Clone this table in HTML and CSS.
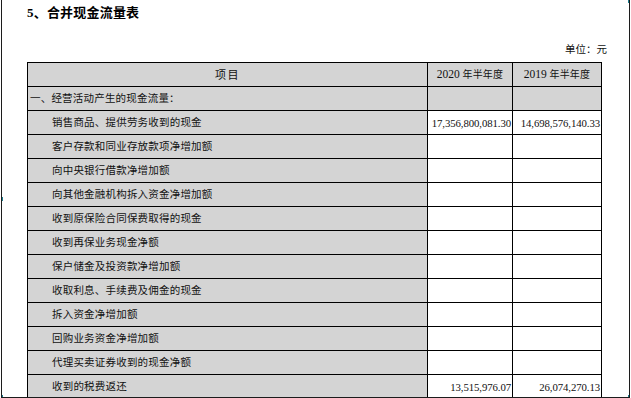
FILE: index.html
```html
<!DOCTYPE html>
<html lang="zh-CN">
<head>
<meta charset="utf-8">
<title>合并现金流量表</title>
<link rel="stylesheet" href="styles.css">
</head>
<body>
<div class="page">
  <h1 class="title"><span class="num">5</span>、合并现金流量表</h1>
  <div class="unit">单位：元</div>
  <table class="cf">
    <colgroup><col class="c1"><col class="c2"><col class="c3"></colgroup>
    <thead>
      <tr><th class="item">项目</th><th><span class="yr">2020</span> 年半年度</th><th><span class="yr">2019</span> 年半年度</th></tr>
    </thead>
    <tbody>
      <tr class="sec"><td class="lbl">一、经营活动产生的现金流量：</td><td></td><td></td></tr>
      <tr><td class="lbl ind">销售商品、提供劳务收到的现金</td><td class="amt">17,356,800,081.30</td><td class="amt">14,698,576,140.33</td></tr>
      <tr><td class="lbl ind">客户存款和同业存放款项净增加额</td><td></td><td></td></tr>
      <tr><td class="lbl ind">向中央银行借款净增加额</td><td></td><td></td></tr>
      <tr><td class="lbl ind">向其他金融机构拆入资金净增加额</td><td></td><td></td></tr>
      <tr><td class="lbl ind">收到原保险合同保费取得的现金</td><td></td><td></td></tr>
      <tr><td class="lbl ind">收到再保业务现金净额</td><td></td><td></td></tr>
      <tr><td class="lbl ind">保户储金及投资款净增加额</td><td></td><td></td></tr>
      <tr><td class="lbl ind">收取利息、手续费及佣金的现金</td><td></td><td></td></tr>
      <tr><td class="lbl ind">拆入资金净增加额</td><td></td><td></td></tr>
      <tr><td class="lbl ind">回购业务资金净增加额</td><td></td><td></td></tr>
      <tr><td class="lbl ind">代理买卖证券收到的现金净额</td><td></td><td></td></tr>
      <tr><td class="lbl ind">收到的税费返还</td><td class="amt">13,515,976.07</td><td class="amt">26,074,270.13</td></tr>
    </tbody>
  </table>
  <span class="handle h-ml"></span>
  <span class="handle h-tr"></span>
  <span class="handle h-bl"></span>
  <span class="handle h-br"></span>
</div>
</body>
</html>
```

FILE: styles.css
```css
html, body {
  margin: 0;
  padding: 0;
  background: #fff;
}
body {
  font-family: "Liberation Serif", "Noto Sans CJK SC", serif;
  color: #111;
}
.page {
  position: relative;
  box-sizing: border-box;
  width: 629px;
  height: 398px;
  margin-left: 1px;
  padding: 0 0 0 25px;
  border-left: 1px solid #1c1c1c;
  border-right: 1px solid #1c1c1c;
  border-bottom: 1px solid #1c1c1c;
  overflow: hidden;
}
.title {
  margin: 0;
  padding-top: 4px;
  font-size: 13px;
  line-height: 18px;
  font-weight: bold;
  color: #000;
  letter-spacing: 0.2px;
}
.title .num {
  font-family: "Liberation Serif", serif;
}
.unit {
  margin-top: 21px;
  padding-right: 22px;
  text-align: right;
  font-size: 10.5px;
  line-height: 14px;
}
.cf {
  margin-top: 5px;
  width: 575px;
  table-layout: fixed;
  border-collapse: collapse;
}
.c1 { width: 400px; }
.c2 { width: 85px; }
.c3 { width: 89px; }
.cf th, .cf td {
  border: 1px solid #000;
  height: 24px;
  padding: 0;
  box-sizing: border-box;
  font-size: 10.5px;
  line-height: 14px;
  white-space: nowrap;
  overflow: hidden;
}
.cf th {
  background: #d4d4d4;
  font-weight: normal;
  text-align: center;
  font-size: 10px;
  letter-spacing: 0.2px;
}
.cf th.item {
  font-size: 11px;
  letter-spacing: 1.5px;
}
.cf th .yr {
  font-size: 11.5px;
  letter-spacing: 0;
}
.cf .lbl {
  background: #d4d4d4;
  letter-spacing: 0.2px;
  padding-left: 2px;
}
.cf .lbl.ind {
  padding-left: 24px;
}
.cf .sec td {
  background: #d4d4d4;
}
.cf td.amt {
  text-align: right;
  font-family: "Liberation Serif", serif;
  font-size: 10.8px;
  letter-spacing: -0.1px;
  padding-right: 1px;
}
.handle {
  position: absolute;
  width: 2px;
  height: 3px;
  background: #1b7c8c;
}
.h-ml { left: -1px; top: 197px; height: 4px; }
.h-tr { right: -1px; top: 0; }
.h-bl { left: -1px; bottom: -1px; }
.h-br { right: -1px; bottom: -1px; }
```
